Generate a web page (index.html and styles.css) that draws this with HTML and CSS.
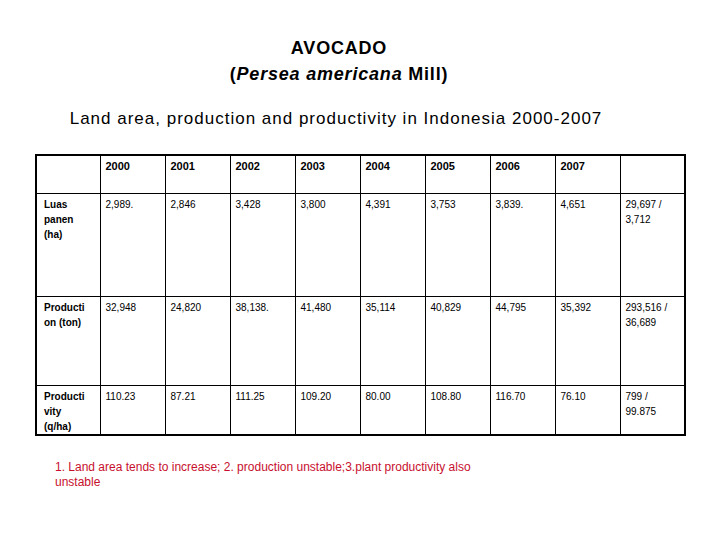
FILE: index.html
```html
<!DOCTYPE html>
<html>
<head>
<meta charset="utf-8">
<link rel="stylesheet" href="styles.css">
</head>
<body>
<div class="slide">
  <div class="title">
    <div class="t1">AVOCADO</div>
    <div class="t2">(<i>Persea americana</i> Mill)</div>
  </div>
  <div class="subtitle">Land area, production and productivity in Indonesia 2000-2007</div>
  <table class="data">
    <colgroup>
      <col class="c0"><col class="cy"><col class="cy"><col class="cy"><col class="cy"><col class="cy"><col class="cy"><col class="cy"><col class="cy"><col class="cy">
    </colgroup>
    <tr class="r0">
      <th></th><th>2000</th><th>2001</th><th>2002</th><th>2003</th><th>2004</th><th>2005</th><th>2006</th><th>2007</th><th></th>
    </tr>
    <tr class="r1">
      <th class="lbl">Luas<br>panen<br>(ha)</th><td>2,989.</td><td>2,846</td><td>3,428</td><td>3,800</td><td>4,391</td><td>3,753</td><td>3,839.</td><td>4,651</td><td>29,697 /<br>3,712</td>
    </tr>
    <tr class="r2">
      <th class="lbl">Producti<br>on (ton)</th><td>32,948</td><td>24,820</td><td>38,138.</td><td>41,480</td><td>35,114</td><td>40,829</td><td>44,795</td><td>35,392</td><td>293,516 /<br>36,689</td>
    </tr>
    <tr class="r3">
      <th class="lbl">Producti<br>vity<br>(q/ha)</th><td>110.23</td><td>87.21</td><td>111.25</td><td>109.20</td><td>80.00</td><td>108.80</td><td>116.70</td><td>76.10</td><td>799 /<br>99.875</td>
    </tr>
  </table>
  <div class="note">1. Land area tends to increase; 2. production unstable;3.plant productivity also<br>unstable</div>
</div>
</body>
</html>
```
FILE: styles.css
```css
html, body {
  margin: 0;
  padding: 0;
  background: #fff;
}
.slide {
  width: 720px;
  height: 540px;
  font-family: "Liberation Sans", Arial, sans-serif;
  color: #000;
  display: flex;
  flex-direction: column;
}
.title {
  margin-top: 35px;
  width: 678px;
  text-align: center;
  font-weight: bold;
  font-size: 18px;
  line-height: 26px;
  letter-spacing: 0.8px;
}
.title i {
  font-style: italic;
}
.subtitle {
  margin-top: 22px;
  width: 672px;
  text-align: center;
  font-size: 17px;
  line-height: 20px;
  letter-spacing: 1px;
}
.data {
  margin-top: 25px;
  margin-left: 35px;
  border-collapse: collapse;
  border: 2px solid #000;
  table-layout: fixed;
  width: 649px;
}
.c0 { width: 64px; }
.cy { width: 65px; }
.data th, .data td {
  border: 1px solid #000;
  vertical-align: top;
  text-align: left;
  font-size: 10px;
  line-height: 15px;
  padding: 3px 5px 0;
}
.data th {
  font-weight: bold;
  font-size: 11px;
}
.data th.lbl {
  font-size: 10px;
  padding-left: 7px;
}
.r0 { height: 38px; }
.r1 { height: 103px; }
.r2 { height: 89px; }
.r3 { height: 49px; }
.note {
  margin-top: 24px;
  margin-left: 55px;
  color: #c8102e;
  font-size: 12px;
  line-height: 15px;
}
```
